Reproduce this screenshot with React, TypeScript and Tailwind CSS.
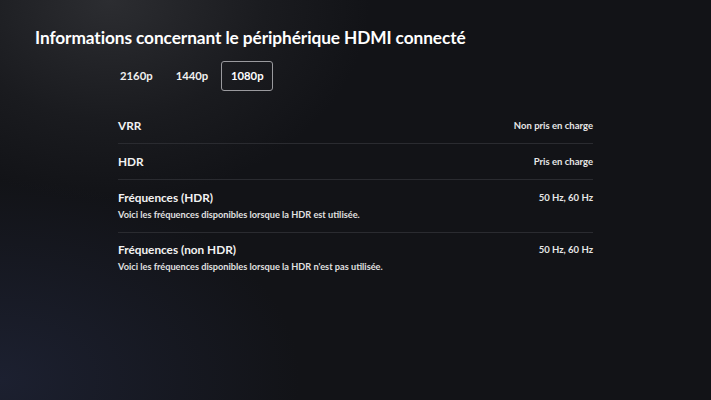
import React from "react";

const font = { fontFamily: 'Lato, "Open Sans", sans-serif' };

function Row({ label, value, desc, last, top = 9 }: { label: string; value: string; desc?: string; last?: boolean; top?: number }) {
  return (
    <div
      className={`flex flex-col ${last ? "" : "border-b border-[#2a2b30]"} ${desc ? "pb-[11px]" : "pb-[8px]"} ${top === 9 ? "pt-[9px]" : "pt-[8px]"}`}
    >
      <div className="flex items-center justify-between h-[18px]">
        <span className="text-[11.8px] font-bold text-[#f2f2f2]">{label}</span>
        <span className="text-[9.5px] font-bold text-[#e6e6e6]">{value}</span>
      </div>
      {desc && (
        <div className="text-[9.2px] font-bold text-[#e0e0e0] mt-[1px] leading-[13px]">{desc}</div>
      )}
    </div>
  );
}

export default function App() {
  return (
    <div className="w-[711px] h-[400px] overflow-hidden relative bg-[#121317]" style={font}>
      <div className="absolute inset-0 bg-[radial-gradient(ellipse_260px_200px_at_110px_0px,#2c2d31_0%,#1a1b1f_60%,transparent_100%)]" />
      <div className="absolute inset-0 bg-[radial-gradient(ellipse_300px_200px_at_0px_380px,#1c2030_0%,transparent_100%)]" />
      <div className="relative flex flex-col">
        <h1 className="pl-[35px] pt-[26px] text-[17.3px] font-bold text-white tracking-[-0.1px] leading-[24px]">
          Informations concernant le périphérique HDMI connecté
        </h1>
        <div className="flex items-center pl-[110px] mt-[11px]">
          <div className="px-[10px] h-[30px] flex items-center text-[11.3px] font-bold text-[#f0f0f0]">2160p</div>
          <div className="px-[13px] h-[30px] flex items-center text-[11.3px] font-bold text-[#f0f0f0]">1440p</div>
          <div className="w-[52px] justify-center h-[30px] flex items-center text-[11.3px] font-bold text-white border border-[#9a9a9e] rounded-[3px] ml-[0px]">1080p</div>
        </div>
        <div className="ml-[118px] w-[475px] mt-[17px] flex flex-col">
          <Row label="VRR" value="Non pris en charge" />
          <Row label="HDR" value="Pris en charge" />
          <Row label="Fréquences (HDR)" value="50 Hz, 60 Hz" desc="Voici les fréquences disponibles lorsque la HDR est utilisée." />
          <Row label="Fréquences (non HDR)" value="50 Hz, 60 Hz" desc="Voici les fréquences disponibles lorsque la HDR n'est pas utilisée." last top={8} />
        </div>
      </div>
    </div>
  );
}
